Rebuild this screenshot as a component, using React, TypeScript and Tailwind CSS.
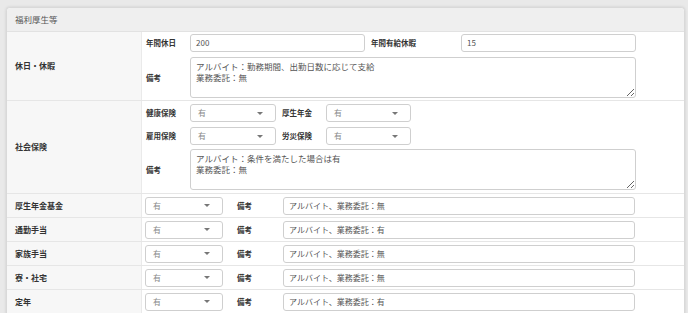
import React from "react";

const font = { fontFamily: '"Noto Sans CJK JP", "Noto Sans", sans-serif' };

const Select: React.FC<{ value: string; width: string }> = ({ value, width }) => {
  return (
    <div
      className={`${width} h-[18px] border border-[#cfcfcf] rounded-[3px] bg-white flex items-center justify-between pl-[7px] pr-[12px] text-[8px] text-[#888]`}
    >
      <span>{value}</span>
      <span className="w-0 h-0 border-l-[3px] border-r-[3px] border-t-[3px] border-l-transparent border-r-transparent border-t-[#777]" />
    </div>
  );
};

const TextInput: React.FC<{ value: string; width: string }> = ({ value, width }) => {
  return (
    <div
      className={`${width} h-[18px] border border-[#cfcfcf] rounded-[3px] bg-white flex items-center px-[5px] text-[8px] text-[#555]`}
    >
      {value}
    </div>
  );
};

const Memo: React.FC<{ lines: string[] }> = ({ lines }) => {
  return (
    <textarea
      readOnly
      defaultValue={lines.join("\n")}
      className="w-[446px] h-[41px] border border-[#cfcfcf] rounded-[3px] bg-white px-[5px] py-[3px] text-[8.5px] leading-[11px] text-[#555] outline-none"
      style={font}
    />
  );
};

const RowLabel: React.FC<{ children: React.ReactNode }> = ({ children }) => (
  <div className="w-[135px] shrink-0 bg-[#f7f7f7] border-r border-[#eaeaea] flex items-center pl-[8px] text-[8px] font-bold text-[#333]">
    {children}
  </div>
);

const SubLabel: React.FC<{ children: React.ReactNode; width: string }> = ({ children, width }) => (
  <div className={`${width} shrink-0 text-[7.5px] font-bold text-[#333]`}>{children}</div>
);

const simpleRows = [
  { label: "厚生年金基金", memo: "アルバイト、業務委託：無" },
  { label: "通勤手当", memo: "アルバイト、業務委託：有" },
  { label: "家族手当", memo: "アルバイト、業務委託：無" },
  { label: "寮・社宅", memo: "アルバイト、業務委託：無" },
  { label: "定年", memo: "アルバイト、業務委託：有" },
];

export default function App() {
  return (
    <div className="w-[688px] h-[313px] overflow-hidden bg-[#e9e9e9] pt-[7px] pl-[6px]" style={font}>
      <div className="w-[679px] bg-white border border-[#d9d9d9] rounded-t-[4px] shadow-[0_0_3px_rgba(0,0,0,0.12)]">
        <div className="h-[24px] bg-[#efefef] border-b border-[#e2e2e2] rounded-t-[4px] flex items-center pl-[8px] text-[8.5px] text-[#555]">
          福利厚生等
        </div>

        {/* 休日・休暇 */}
        <div className="flex h-[69px] border-b border-[#e6e6e6]">
          <RowLabel>休日・休暇</RowLabel>
          <div className="flex flex-col gap-[5px] pl-[4px] pt-[2px]">
            <div className="flex items-center">
              <SubLabel width="w-[44px]">年間休日</SubLabel>
              <TextInput value="200" width="w-[175px]" />
              <div className="w-[6px]" />
              <SubLabel width="w-[90px]">年間有給休暇</SubLabel>
              <TextInput value="15" width="w-[175px]" />
            </div>
            <div className="flex items-center">
              <SubLabel width="w-[44px]">備考</SubLabel>
              <Memo lines={["アルバイト：勤務期間、出勤日数に応じて支給", "業務委託：無"]} />
            </div>
          </div>
        </div>

        {/* 社会保険 */}
        <div className="flex h-[93px] border-b border-[#e6e6e6]">
          <RowLabel>社会保険</RowLabel>
          <div className="flex flex-col pl-[4px] pt-[3px]">
            <div className="flex items-center">
              <SubLabel width="w-[44px]">健康保険</SubLabel>
              <Select value="有" width="w-[86px]" />
              <div className="w-[6px]" />
              <SubLabel width="w-[44px]">厚生年金</SubLabel>
              <Select value="有" width="w-[85px]" />
            </div>
            <div className="flex items-center mt-[5px]">
              <SubLabel width="w-[44px]">雇用保険</SubLabel>
              <Select value="有" width="w-[86px]" />
              <div className="w-[6px]" />
              <SubLabel width="w-[44px]">労災保険</SubLabel>
              <Select value="有" width="w-[85px]" />
            </div>
            <div className="flex items-center mt-[4px]">
              <SubLabel width="w-[44px]">備考</SubLabel>
              <Memo lines={["アルバイト：条件を満たした場合は有", "業務委託：無"]} />
            </div>
          </div>
        </div>

        {simpleRows.map((row) => (
          <div key={row.label} className="flex h-[24px] border-b border-[#e6e6e6]">
            <RowLabel>{row.label}</RowLabel>
            <div className="flex items-center pl-[3px]">
              <Select value="有" width="w-[78px]" />
              <div className="w-[14px]" />
              <SubLabel width="w-[46px]">備考</SubLabel>
              <TextInput value={row.memo} width="w-[352px]" />
            </div>
          </div>
        ))}
      </div>
    </div>
  );
}
